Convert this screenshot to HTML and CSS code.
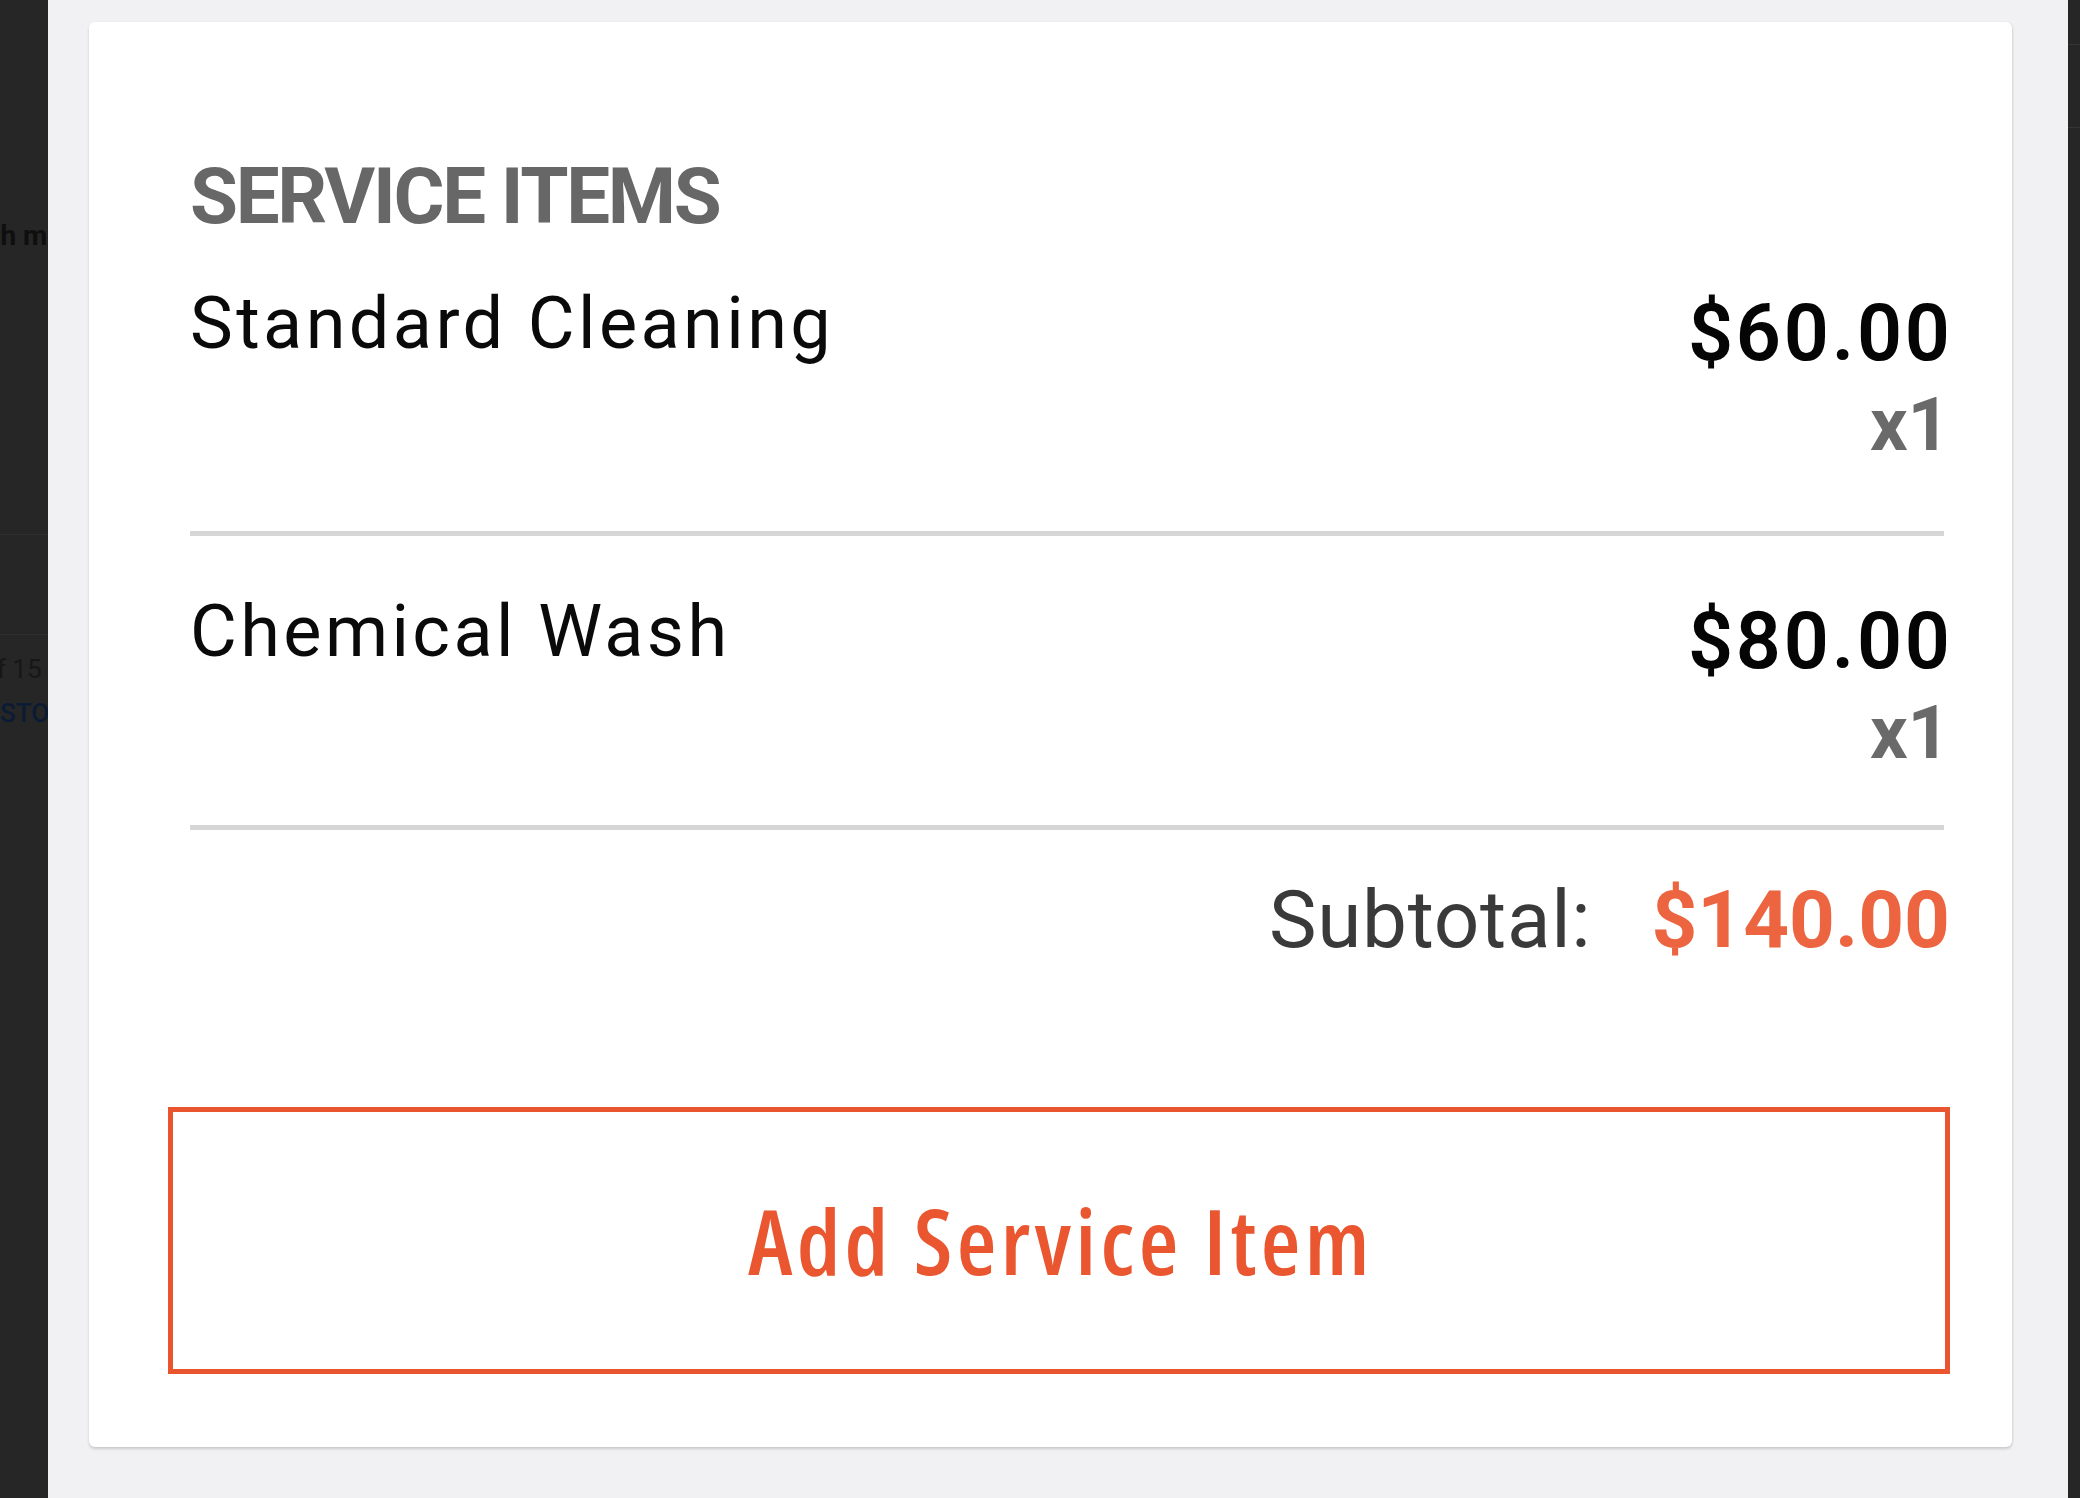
FILE: index.html
```html
<!DOCTYPE html>
<html lang="en">
<head>
<meta charset="utf-8">
<title>Service Items</title>
<link rel="stylesheet" href="styles.css">
</head>
<body>
  <aside class="shade shade-left">
    <div class="ghost ghost-title">with more</div>
    <div class="ghost-sep ghost-sep-1"></div>
    <div class="ghost-sep ghost-sep-2"></div>
    <div class="ghost ghost-count">of 15 &gt;</div>
    <div class="ghost ghost-link">STORE</div>
  </aside>

  <main class="stage">
    <section class="card">
      <h2 class="card-title">SERVICE ITEMS</h2>
      <ul class="items">
        <li class="item item-first">
          <span class="item-name">Standard Cleaning</span>
          <div class="item-price">
            <div class="price">$60.00</div>
            <div class="qty">x1</div>
          </div>
        </li>
        <li class="item item-second">
          <span class="item-name">Chemical Wash</span>
          <div class="item-price">
            <div class="price">$80.00</div>
            <div class="qty">x1</div>
          </div>
        </li>
      </ul>
      <div class="subtotal">
        <span class="subtotal-label">Subtotal:</span>
        <span class="subtotal-value">$140.00</span>
      </div>
      <button class="add-btn" type="button">Add Service Item</button>
    </section>
  </main>

  <aside class="shade shade-right">
    <div class="rline rline-1"></div>
    <div class="rline rline-2"></div>
  </aside>
</body>
</html>
```
FILE: styles.css
```css
* { box-sizing: border-box; }

html, body {
  margin: 0;
  padding: 0;
}

body {
  width: 2080px;
  height: 1498px;
  display: flex;
  background: #f1f1f3;
  font-family: Roboto, "Liberation Sans", Arial, sans-serif;
  overflow: hidden;
}

/* dimmed page behind the sheet */
.shade {
  background: #262626;
  height: 100%;
  flex: none;
  overflow: hidden;
}

.shade-left {
  width: 48px;
  display: flex;
  flex-direction: column;
}

.ghost {
  white-space: nowrap;
  font-family: Roboto, sans-serif;
}

.ghost-title {
  margin-top: 220px;
  font-size: 28px;
  font-weight: 700;
  line-height: 32px;
  color: #0f0f0f;
  text-indent: -37px;
}

.ghost-sep {
  height: 1px;
  background: #2f2f2f;
  flex: none;
}

.ghost-sep-1 { margin-top: 282px; }
.ghost-sep-2 { margin-top: 99px; }

.ghost-count {
  margin-top: 18px;
  font-size: 26px;
  line-height: 32px;
  color: #171717;
  text-indent: -18px;
}

.ghost-link {
  margin-top: 12px;
  font-size: 26px;
  font-weight: 500;
  line-height: 32px;
  color: #0b1b33;
  text-indent: 0;
}

.shade-right {
  width: 12px;
  display: flex;
  flex-direction: column;
}

.rline {
  height: 1px;
  background: #343434;
  flex: none;
}

.rline-1 { margin-top: 44px; }
.rline-2 { margin-top: 82px; }

/* main area */
.stage {
  flex: 1;
  padding: 22px 56px 0 41px;
}

.card {
  width: 1923px;
  height: 1425px;
  background: #ffffff;
  border-radius: 6px;
  box-shadow: 0 2px 3px rgba(0, 0, 0, 0.16), 1px 0 2px rgba(0, 0, 0, 0.05);
  padding: 136px 62px 0 79px;
  display: flex;
  flex-direction: column;
}

.card-title {
  margin: 0 0 0 22px;
  font-size: 78px;
  line-height: 78px;
  font-weight: 700;
  color: #676767;
  letter-spacing: -2.3px;
}

.items {
  list-style: none;
  margin: -4px 0 0 0;
  padding: 0 0 0 22px;
}

.item {
  display: flex;
  justify-content: space-between;
  align-items: flex-start;
  border-bottom: 5px solid #d6d6d6;
  margin-right: 6px;
}

.item-first {
  padding: 46px 0 60px;
}

.item-second {
  padding: 50px 0 46px;
}

.item-name {
  font-size: 72px;
  line-height: 92px;
  font-weight: 400;
  color: #0a0a0a;
  letter-spacing: 3.4px;
}

.item-price {
  margin-top: 9px;
  margin-right: -6px;
  text-align: right;
}

.price {
  font-size: 79px;
  line-height: 92px;
  font-weight: 600;
  color: #050505;
  letter-spacing: 2.8px;
  margin-right: -2.8px;
}

.qty {
  font-size: 74px;
  line-height: 92px;
  font-weight: 700;
  color: #6a6a6a;
}

.subtotal {
  display: flex;
  justify-content: flex-end;
  align-items: baseline;
  gap: 61px;
  margin-top: 50px;
  padding-right: 0;
  font-size: 80px;
  line-height: 80px;
}

.subtotal-label {
  color: #3a3a3a;
  font-weight: 400;
  letter-spacing: 0.7px;
  margin-right: -1px;
}

.subtotal-value {
  color: #ec6540;
  font-weight: 700;
}

.add-btn {
  margin-top: 147px;
  height: 267px;
  width: 100%;
  background: #ffffff;
  border: 5px solid #e9552f;
  border-radius: 0;
  display: flex;
  align-items: center;
  justify-content: center;
  font-family: "Open Sans", "Noto Sans", sans-serif;
  font-size: 91px;
  line-height: 91px;
  font-weight: 600;
  font-stretch: 87%;
  letter-spacing: 4.4px;
  color: #e9562f;
  padding: 0 0 0 4px;
  cursor: pointer;
}
```
